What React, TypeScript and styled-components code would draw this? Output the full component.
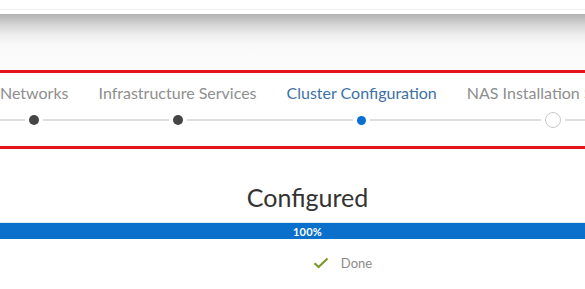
import React from "react";
import styled, { createGlobalStyle } from "styled-components";

const GlobalStyle = createGlobalStyle`
  html, body {
    margin: 0;
    padding: 0;
    background: #fff;
    font-family: "Lato", "Open Sans", sans-serif;
    overflow: hidden;
  }
`;

type StepState = "done" | "current" | "todo";

const steps: { label: string; state: StepState }[] = [
  { label: "Networks", state: "done" },
  { label: "Infrastructure Services", state: "done" },
  { label: "Cluster Configuration", state: "current" },
  { label: "NAS Installation Settings", state: "todo" },
];

const Page = styled.div`
  width: 585px;
  height: 289px;
  overflow: hidden;
  background: #fff;
`;

const TopBar = styled.div`
  height: 14px;
  background: linear-gradient(#fff 0, #fff 9px, #efefef 9px, #efefef 10px, #fff 10px);
`;

const Shade = styled.div`
  height: 56px;
  background: linear-gradient(#b1b1b1 0, #d6d6d6 11px, #eeeeee 21px, #f9f9f9 31px, #fcfcfc 100%);
`;

const StepperBox = styled.section`
  border-top: 3px solid #e5141c;
  border-bottom: 3px solid #e5141c;
  padding: 10px 0 18px;
  overflow: hidden;
`;

const StepRow = styled.div`
  display: flex;
  margin-left: -15px;
  white-space: nowrap;
`;

const Step = styled.div`
  display: flex;
  flex-direction: column;
  flex: none;
`;

const Label = styled.div<{ $state: StepState }>`
  padding: 0 15px;
  font-size: 16px;
  line-height: 20px;
  text-align: center;
  color: ${(p) => (p.$state === "current" ? "#3d70a6" : "#8e8e8e")};
`;

const Track = styled.div`
  display: flex;
  align-items: center;
  gap: 4px;
  height: 16px;
  margin-top: 9px;
  &::before,
  &::after {
    content: "";
    flex: 1;
    height: 2px;
    background: #dedede;
  }
`;

const Dot = styled.span<{ $state: StepState }>`
  flex: none;
  box-sizing: border-box;
  border-radius: 50%;
  width: ${(p) => (p.$state === "todo" ? 16 : p.$state === "current" ? 9 : 10)}px;
  height: ${(p) => (p.$state === "todo" ? 16 : p.$state === "current" ? 9 : 10)}px;
  background: ${(p) =>
    p.$state === "done" ? "#454545" : p.$state === "current" ? "#0a6fd2" : "#fff"};
  border: ${(p) => (p.$state === "todo" ? "1.5px solid #c9c9c9" : "none")};
`;

const Heading = styled.h2`
  margin: 34px 0 0;
  padding-left: 30px;
  font-size: 25px;
  line-height: 28px;
  font-weight: 400;
  text-align: center;
  color: #333;
`;

const ProgressBar = styled.div`
  margin-top: 11px;
  height: 16px;
  background: #0b6fcc;
  border-top: 1px solid #dcebf7;
  display: flex;
  align-items: center;
  justify-content: center;
  padding-left: 30px;
`;

const ProgressText = styled.span`
  color: #fff;
  font-size: 11px;
  font-weight: 700;
  letter-spacing: 0.2px;
`;

const DoneRow = styled.div`
  margin-top: 16px;
  padding-left: 100px;
  display: flex;
  align-items: center;
  justify-content: center;
  gap: 12px;
  height: 16px;
`;

const DoneText = styled.span`
  font-size: 13px;
  color: #8a8a8a;
`;

const Check = () => (
  <svg width="16" height="12" viewBox="0 0 16 12">
    <path d="M1.5 6.2 L5.6 10 L14.5 1.5" fill="none" stroke="#7a9a2c" strokeWidth="2.2" />
  </svg>
);

export default function App() {
  return (
    <Page>
      <GlobalStyle />
      <TopBar />
      <Shade />
      <StepperBox>
        <StepRow>
          {steps.map((s) => (
            <Step key={s.label}>
              <Label $state={s.state}>{s.label}</Label>
              <Track>
                <Dot $state={s.state} />
              </Track>
            </Step>
          ))}
        </StepRow>
      </StepperBox>
      <Heading>Configured</Heading>
      <ProgressBar>
        <ProgressText>100%</ProgressText>
      </ProgressBar>
      <DoneRow>
        <Check />
        <DoneText>Done</DoneText>
      </DoneRow>
    </Page>
  );
}
